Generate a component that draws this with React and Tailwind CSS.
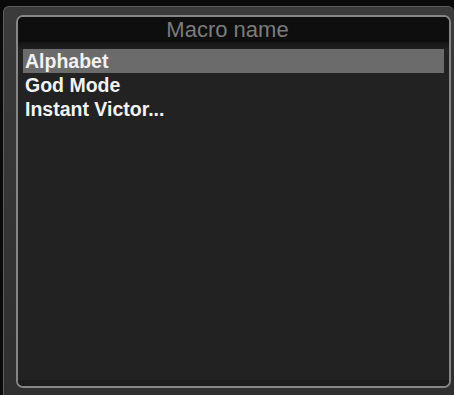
import React from 'react';

const MACROS = ['Alphabet', 'God Mode', 'Instant Victor...'];

export default function App() {
  const selected = 0;

  return (
    <div className="w-[454px] h-[395px] bg-[#0a0a0a] pt-[6px] pl-[3px] font-['Liberation_Sans',Arial,sans-serif] overflow-hidden">
      <div className="h-full rounded-t-[6px] border-t border-l border-[#5e5e5e] bg-gradient-to-b from-[#3b3b3b] to-[#2f2f2f] pl-[12px] pt-[8px] pr-[3px] pb-[7px]">
        <div className="h-full flex flex-col rounded-[7px] border-2 border-[#868686] bg-[#222222] overflow-hidden">
          <div className="h-[25px] shrink-0 bg-[#0e0e0e] text-[#7c7c7c] text-[22px] leading-[25px] text-center pr-[12px]">
            Macro name
          </div>
          <div className="h-[7px] shrink-0 bg-gradient-to-b from-[#151515] to-[#1f1f1f]" />
          <ul className="flex-1 pl-[5px] pr-[5px]">
            {MACROS.map((name, i) => (
              <li
                key={name}
                className={`h-[24px] leading-[24px] pl-[2px] text-[19.5px] font-bold text-[#f2f2f2] whitespace-nowrap ${
                  i === selected ? 'bg-[#6b6b6b]' : ''
                }`}
              >
                {name}
              </li>
            ))}
          </ul>
          <div className="h-[6px] shrink-0 bg-[#1c1c1c]" />
        </div>
      </div>
    </div>
  );
}
